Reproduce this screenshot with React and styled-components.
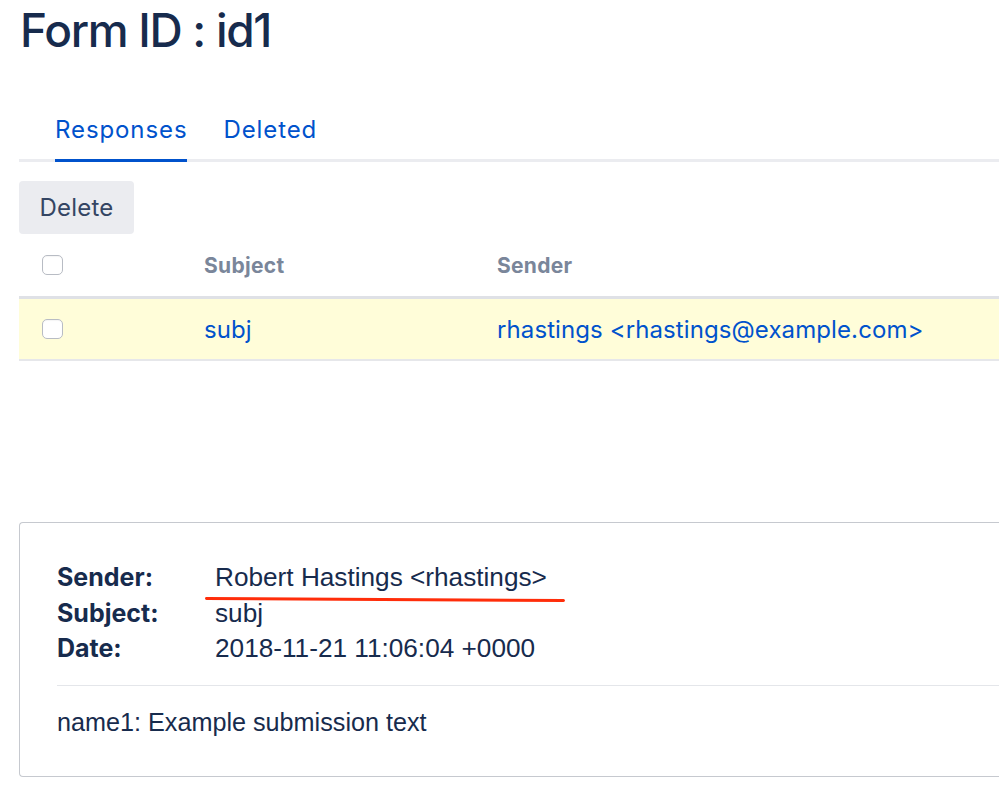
import styled, { createGlobalStyle } from "styled-components"

const GlobalStyle = createGlobalStyle`
    html, body {
        margin: 0;
        padding: 0;
        background: #fff;
        overflow: hidden;
    }
    body {
        font-family: Inter, "Noto Sans", "Liberation Sans", sans-serif;
        color: #172b4d;
    }
`

const Page = styled.div`
    width: 1120px;
    padding: 0 0 0 19px;
`

const Title = styled.h1`
    margin: 0;
    padding: 2px 0 0 1px;
    font-size: 46px;
    line-height: 56px;
    font-weight: 500;
    letter-spacing: -1.3px;
    color: #172b4d;
`

const TabList = styled.ul`
    list-style: none;
    margin: 57px 0 0;
    padding: 0 0 0 36px;
    display: flex;
    gap: 36px;
    border-bottom: 3px solid #ebecf0;
`

const Tab = styled.li`
    font-size: 24px;
    line-height: 28px;
    letter-spacing: 0.9px;
    padding: 1px 0 15px;
    margin-bottom: -3px;
    color: #0052cc;
    border-bottom: 3px solid ${({ active }) => active ? "#0052cc" : "transparent"};
`

const DeleteButton = styled.button`
    margin-top: 19px;
    display: block;
    width: 115px;
    height: 53px;
    border: none;
    border-radius: 4px;
    background: #ebecf0;
    color: #344563;
    font-family: inherit;
    font-size: 24px;
    letter-spacing: 0.2px;
    padding: 0;
`

const Table = styled.div`
    width: 100%;
`

const Row = styled.div`
    display: grid;
    grid-template-columns: 185px 293px 1fr;
    align-items: center;
    height: ${({ head }) => head ? "62px" : "60px"};
    background: ${({ head }) => head ? "#fff" : "#fffdd9"};
    border-bottom: ${({ head }) => head ? "3px solid #dfe1e6" : "2px solid #e6e7ea"};
`

const CheckCell = styled.div`
    padding-left: 23px;
    display: flex;
    align-items: center;
`

const Checkbox = styled.span`
    display: block;
    width: 19px;
    height: 18px;
    border: 1.5px solid #b8bcc4;
    border-radius: 5px;
    background: #fff;
    box-shadow: inset 0 1px 1px rgba(0, 0, 0, 0.04);
`

const HeadCell = styled.div`
    font-size: 21px;
    font-weight: 700;
    letter-spacing: 0.3px;
    color: #7a869a;
`

const LinkCell = styled.div`
    font-size: 24px;
    color: #0052cc;
    letter-spacing: 0.1px;
`

const Panel = styled.section`
    margin-top: 161px;
    border: 1.5px solid #c6c9cf;
    border-right: none;
    border-radius: 4px 0 0 4px;
    padding: 37px 0 36px 37px;
    font-family: "Liberation Sans", Arial, sans-serif;
`

const Meta = styled.div`
    display: grid;
    grid-template-columns: 158px 1fr;
    font-size: 26.2px;
    line-height: 35.5px;
`

const Label = styled.div`
    font-family: Inter, "Noto Sans", sans-serif;
    font-weight: 700;
    font-size: 25px;
    color: #172b4d;
`

const Value = styled.div`
    color: #172b4d;
`

const Marked = styled.span`
    position: relative;

    &::after {
        content: "";
        position: absolute;
        left: -10px;
        right: -18px;
        top: 36px;
        height: 3px;
        border-radius: 2px;
        background: #ff2d0a;
        transform: rotate(0.3deg);
    }
`

const Divider = styled.hr`
    margin: 18px 0 18px;
    border: none;
    border-top: 1.5px solid #e4e6ea;
`

const Body = styled.div`
    font-size: 25.2px;
    line-height: 36px;
    color: #172b4d;
`

const App = () => {
    const rows = [
        { subject: "subj", sender: "rhastings <rhastings@example.com>" },
    ]

    return (
        <Page>
            <GlobalStyle />
            <Title>Form ID : id1</Title>

            <TabList>
                <Tab active>Responses</Tab>
                <Tab>Deleted</Tab>
            </TabList>

            <DeleteButton>Delete</DeleteButton>

            <Table>
                <Row head>
                    <CheckCell><Checkbox /></CheckCell>
                    <HeadCell>Subject</HeadCell>
                    <HeadCell>Sender</HeadCell>
                </Row>
                {rows.map((r) => (
                    <Row key={r.subject}>
                        <CheckCell><Checkbox /></CheckCell>
                        <LinkCell>{r.subject}</LinkCell>
                        <LinkCell>{r.sender}</LinkCell>
                    </Row>
                ))}
            </Table>

            <Panel>
                <Meta>
                    <Label>Sender:</Label>
                    <Value><Marked>Robert Hastings &lt;rhastings&gt;</Marked></Value>
                    <Label>Subject:</Label>
                    <Value>subj</Value>
                    <Label>Date:</Label>
                    <Value>2018-11-21 11:06:04 +0000</Value>
                </Meta>
                <Divider />
                <Body>name1: Example submission text</Body>
            </Panel>
        </Page>
    )
}

export default App
